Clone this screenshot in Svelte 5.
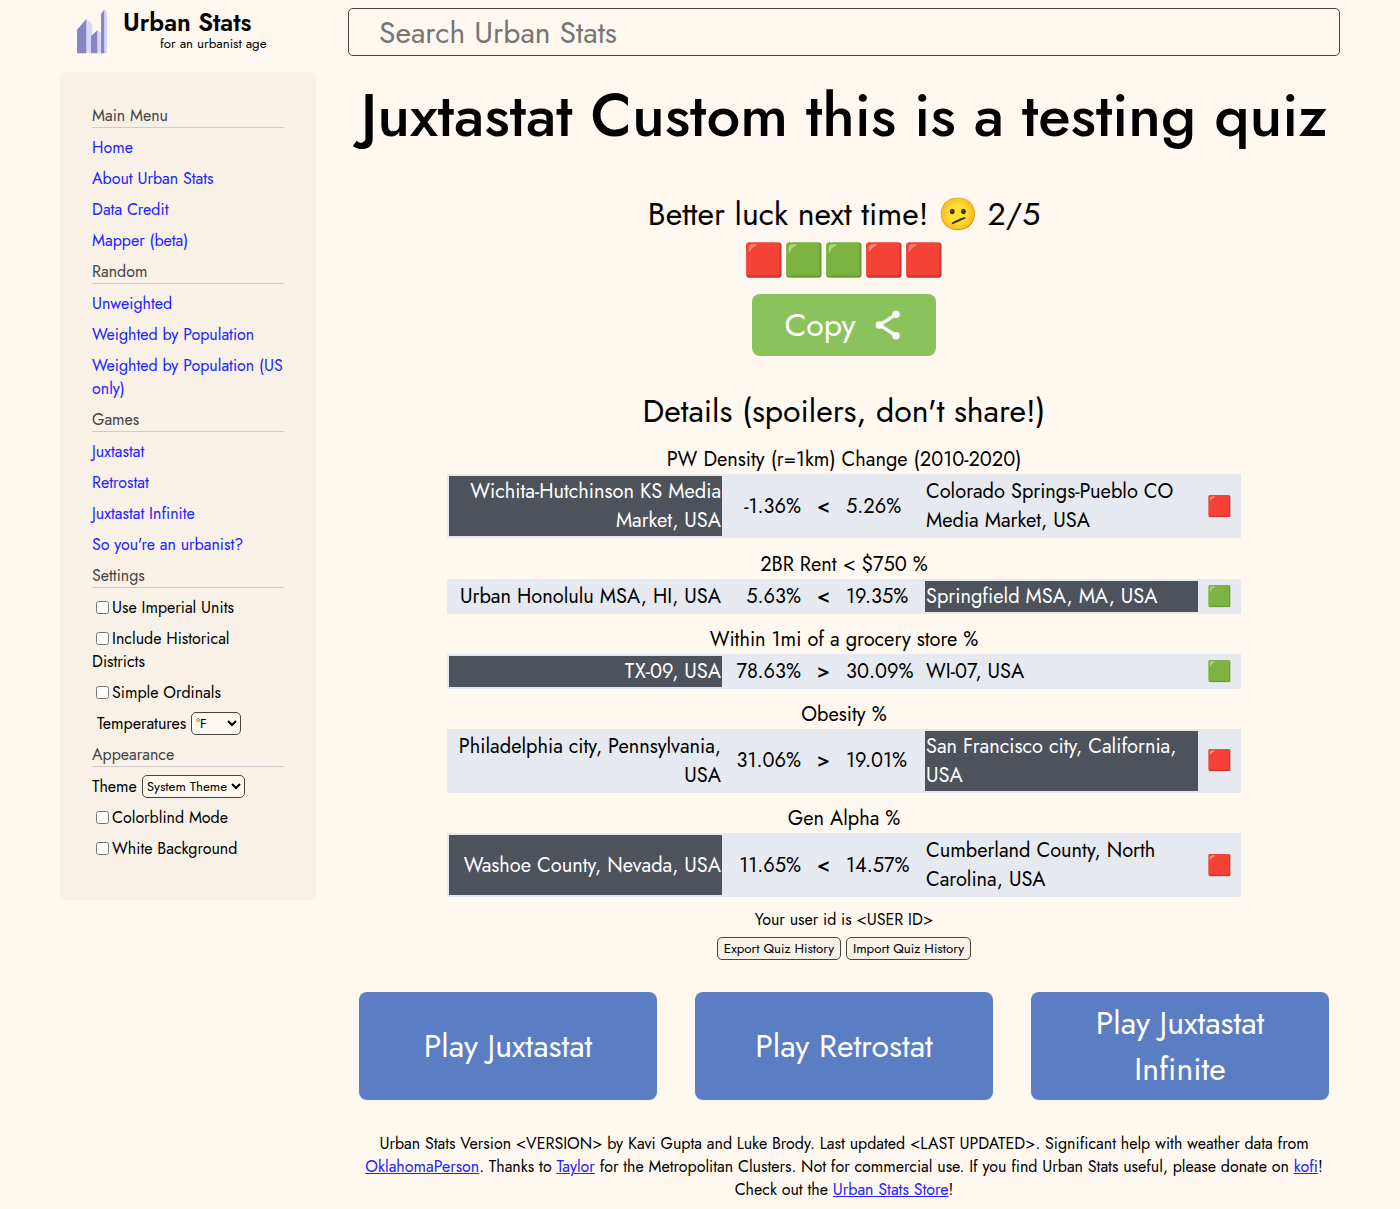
<script>
  const menu = [
    { title: 'Main Menu', links: ['Home', 'About Urban Stats', 'Data Credit', 'Mapper (beta)'] },
    { title: 'Random', links: ['Unweighted', 'Weighted by Population', 'Weighted by Population (US only)'] },
    { title: 'Games', links: ['Juxtastat', 'Retrostat', 'Juxtastat Infinite', "So you're an urbanist?"] },
  ];
  const settings = ['Use Imperial Units', 'Include Historical Districts', 'Simple Ordinals'];
  const appearance = ['Colorblind Mode', 'White Background'];

  const rows = [
    { stat: 'PW Density (r=1km) Change (2010-2020)', a: 'Wichita-Hutchinson KS Media Market, USA', b: 'Colorado Springs-Pueblo CO Media Market, USA', va: '-1.36%', op: '<', vb: '5.26%', pick: 'a', ok: false },
    { stat: '2BR Rent < $750 %', a: 'Urban Honolulu MSA, HI, USA', b: 'Springfield MSA, MA, USA', va: '5.63%', op: '<', vb: '19.35%', pick: 'b', ok: true },
    { stat: 'Within 1mi of a grocery store %', a: 'TX-09, USA', b: 'WI-07, USA', va: '78.63%', op: '>', vb: '30.09%', pick: 'a', ok: true },
    { stat: 'Obesity %', a: 'Philadelphia city, Pennsylvania, USA', b: 'San Francisco city, California, USA', va: '31.06%', op: '>', vb: '19.01%', pick: 'b', ok: false },
    { stat: 'Gen Alpha %', a: 'Washoe County, Nevada, USA', b: 'Cumberland County, North Carolina, USA', va: '11.65%', op: '<', vb: '14.57%', pick: 'a', ok: false },
  ];

  const square = (ok) => (ok ? '🟩' : '🟥');
  const games = ['Play Juxtastat', 'Play Retrostat', 'Play Juxtastat Infinite'];
</script>

<div class="page">
  <aside>
    <a class="brand" href="#home">
      <svg class="mark" width="32" height="46" viewBox="0 0 32 46" aria-hidden="true">
        <path fill="#d6d6ff" d="M10.3 11 16.3 16.3V45.3H10.3zM21.3 22.3 25 25V45.3H21.3zM28.3 1.3 31 4V45.3H28.3z" />
        <path fill="#8686c0" d="M1 21.7 10.3 11V45.3H1zM15 28.3 21.3 22.3V45.3H15zM25 6.3 28.3 1.3V45.3H25z" />
      </svg>
      <span class="words">
        <span class="name">Urban Stats</span>
        <span class="tag">for an urbanist age</span>
      </span>
    </a>

    <nav class="panel">
      {#each menu as group}
        <h2>{group.title}</h2>
        {#each group.links as link}
          <a class="item" href="#menu">{link}</a>
        {/each}
      {/each}
      <h2>Settings</h2>
      {#each settings as label}
        <label class="item"><input type="checkbox" />{label}</label>
      {/each}
      <div class="item choice indent">
        <span>Temperatures</span>
        <select class="degrees"><option>°F</option><option>°C</option></select>
      </div>
      <h2>Appearance</h2>
      <div class="item choice">
        <span>Theme</span>
        <select class="theme"><option>System Theme</option><option>Light</option></select>
      </div>
      {#each appearance as label}
        <label class="item"><input type="checkbox" />{label}</label>
      {/each}
    </nav>
  </aside>

  <main>
    <input class="search" type="text" placeholder="Search Urban Stats" />
    <h1>Juxtastat Custom this is a testing quiz</h1>

    <section class="result">
      <div>Better luck next time! 🫤 2/5</div>
      <div class="pattern">{#each rows as r}<span>{square(r.ok)}</span>{/each}</div>
      <button class="copy">
        <span>Copy</span>
        <svg width="26" height="30" viewBox="0 0 26 30" aria-hidden="true">
          <path d="M21 4.3 4.5 15 21 25.7" fill="none" stroke="#fff" stroke-width="3.3" />
          <circle cx="21" cy="4.3" r="3.8" fill="#fff" />
          <circle cx="4.5" cy="15" r="3.8" fill="#fff" />
          <circle cx="21" cy="25.7" r="3.8" fill="#fff" />
        </svg>
      </button>
    </section>

    <section class="details">
      <h3>Details (spoilers, don't share!)</h3>
      {#each rows as r}
        <div class="question">
          <div class="stat">{r.stat}</div>
          <div class="compare">
            <div class="left" class:picked={r.pick === 'a'}>{r.a}</div>
            <div class="left">{r.va}</div>
            <div class="op">{r.op}</div>
            <div>{r.vb}</div>
            <div class:picked={r.pick === 'b'}>{r.b}</div>
            <div class="outcome">{square(r.ok)}</div>
          </div>
        </div>
      {/each}
    </section>

    <section class="user">
      <div>Your user id is &lt;USER ID&gt;</div>
      <div class="history">
        <button class="export">Export Quiz History</button>
        <button class="import">Import Quiz History</button>
      </div>
    </section>

    <div class="games">
      {#each games as g}
        <a class="game" href="#play">{g}</a>
      {/each}
    </div>

    <footer>
      Urban Stats Version &lt;VERSION&gt; by Kavi Gupta and Luke Brody. Last updated &lt;LAST UPDATED&gt;. Significant
      help with weather data from <a href="#oklahoma">OklahomaPerson</a>. Thanks to <a href="#taylor">Taylor</a> for
      the Metropolitan Clusters. Not for commercial use. If you find Urban Stats useful, please donate on
      <a href="#kofi">kofi</a>! Check out the <a href="#store">Urban Stats Store</a>!
    </footer>
  </main>
</div>

<style>
  :global(body) {
    margin: 0;
    background: #fff8f0;
  }
  .page {
    display: flex;
    gap: 32px;
    width: 1280px;
    margin: 0 auto;
    font: 16px/23px Jost, Lato, sans-serif;
    color: #000;
  }
  aside {
    width: 256px;
    flex: none;
  }
  .brand {
    display: flex;
    gap: 15px;
    box-sizing: border-box;
    height: 72px;
    padding: 8px 0 0 16px;
    color: #000;
    text-decoration: none;
  }
  .words {
    display: flex;
    flex-direction: column;
  }
  .name {
    font-size: 24.7px;
    font-weight: 600;
    line-height: 29px;
  }
  .tag {
    font-size: 13.333px;
    line-height: 13px;
    padding-left: 37px;
  }
  .panel {
    box-sizing: border-box;
    height: 828px;
    padding: 32px;
    border-radius: 5px;
    background: #f7f1e8;
  }
  h2 {
    margin: 0 0 8px;
    font-size: inherit;
    font-weight: 400;
    color: #444;
    border-bottom: 1px solid #ccc;
  }
  .item {
    display: block;
    margin-bottom: 8px;
    text-decoration: none;
  }
  a.item,
  footer a {
    color: #2222ff;
  }
  .item input {
    width: 13px;
    height: 13px;
    margin: 0 3px 0 4px;
    vertical-align: -1px;
  }
  .choice {
    display: flex;
    gap: 5px;
    height: 23px;
  }
  .indent {
    padding-left: 5px;
  }
  select,
  .history button {
    box-sizing: border-box;
    height: 23px;
    padding: 0;
    border: 1px solid #444;
    border-radius: 5px;
    background: #fff8f0;
    color: #000;
    font: 13.333px/19px Jost, Lato, sans-serif;
  }
  .degrees {
    width: 50px;
  }
  .theme {
    width: 103px;
  }
  main {
    width: 992px;
    padding-top: 8px;
    text-align: center;
  }
  .search {
    display: block;
    box-sizing: border-box;
    width: 100%;
    height: 48px;
    padding: 0 30px;
    border: 1px solid #444;
    border-radius: 5px;
    background: #fff8f0;
    font: 30px/46px Jost, Lato, sans-serif;
  }
  .search::placeholder {
    color: #757575;
    opacity: 1;
  }
  h1 {
    margin: 16px 0 0;
    font-size: 60px;
    line-height: 87px;
    font-weight: 500;
    white-space: nowrap;
  }
  .result {
    margin-top: 32px;
    font-size: 32px;
    line-height: 46px;
  }
  .result div {
    height: 46px;
  }
  .pattern {
    display: flex;
    justify-content: center;
  }
  .pattern span {
    width: 40px;
  }
  .copy {
    display: flex;
    align-items: center;
    justify-content: center;
    gap: 19px;
    width: 184px;
    height: 62px;
    margin: 11px auto 0;
    padding: 0 3px 0 0;
    border: 0;
    border-radius: 8px;
    background: #8ac35c;
    color: #fff;
    font: 32px/46px Jost, Lato, sans-serif;
  }
  .details {
    width: 794px;
    margin: 32px auto 0;
    font-size: 20px;
    line-height: 29px;
  }
  h3 {
    margin: 0 0 11.3px;
    font-size: 32px;
    line-height: 46px;
    font-weight: 400;
  }
  .question {
    margin-bottom: 11.22px;
  }
  .compare {
    display: grid;
    grid-template-columns: 273px 78px 39px 78px 273px 39px;
    gap: 2px;
    padding: 2px;
    background: #e6e9ef;
    text-align: left;
  }
  .compare > div {
    display: flex;
    align-items: center;
    min-height: 29px;
    padding: 1px;
  }
  .compare > .left {
    justify-content: flex-end;
    text-align: right;
  }
  .compare > .op,
  .compare > .outcome {
    justify-content: center;
  }
  .compare > .outcome {
    padding-right: 2px;
  }
  .compare > .op {
    font-weight: 500;
  }
  .compare > .picked {
    background: #4e525b;
    color: #fff;
  }
  .history {
    display: flex;
    justify-content: center;
    gap: 5px;
    margin-top: 6px;
  }
  .export {
    width: 124px;
  }
  .import {
    width: 125px;
  }
  .history button {
    background: #f7f1e8;
  }
  .games {
    display: flex;
    justify-content: space-between;
    margin: 32px 11px;
  }
  .game {
    display: flex;
    align-items: center;
    justify-content: center;
    box-sizing: border-box;
    width: 298px;
    height: 108px;
    padding: 0 32px;
    border-radius: 8px;
    background: #5a7dc3;
    color: #fff;
    font-size: 32px;
    line-height: 46px;
    text-decoration: none;
  }
  footer {
    padding: 0 8px 8px;
  }
</style>
